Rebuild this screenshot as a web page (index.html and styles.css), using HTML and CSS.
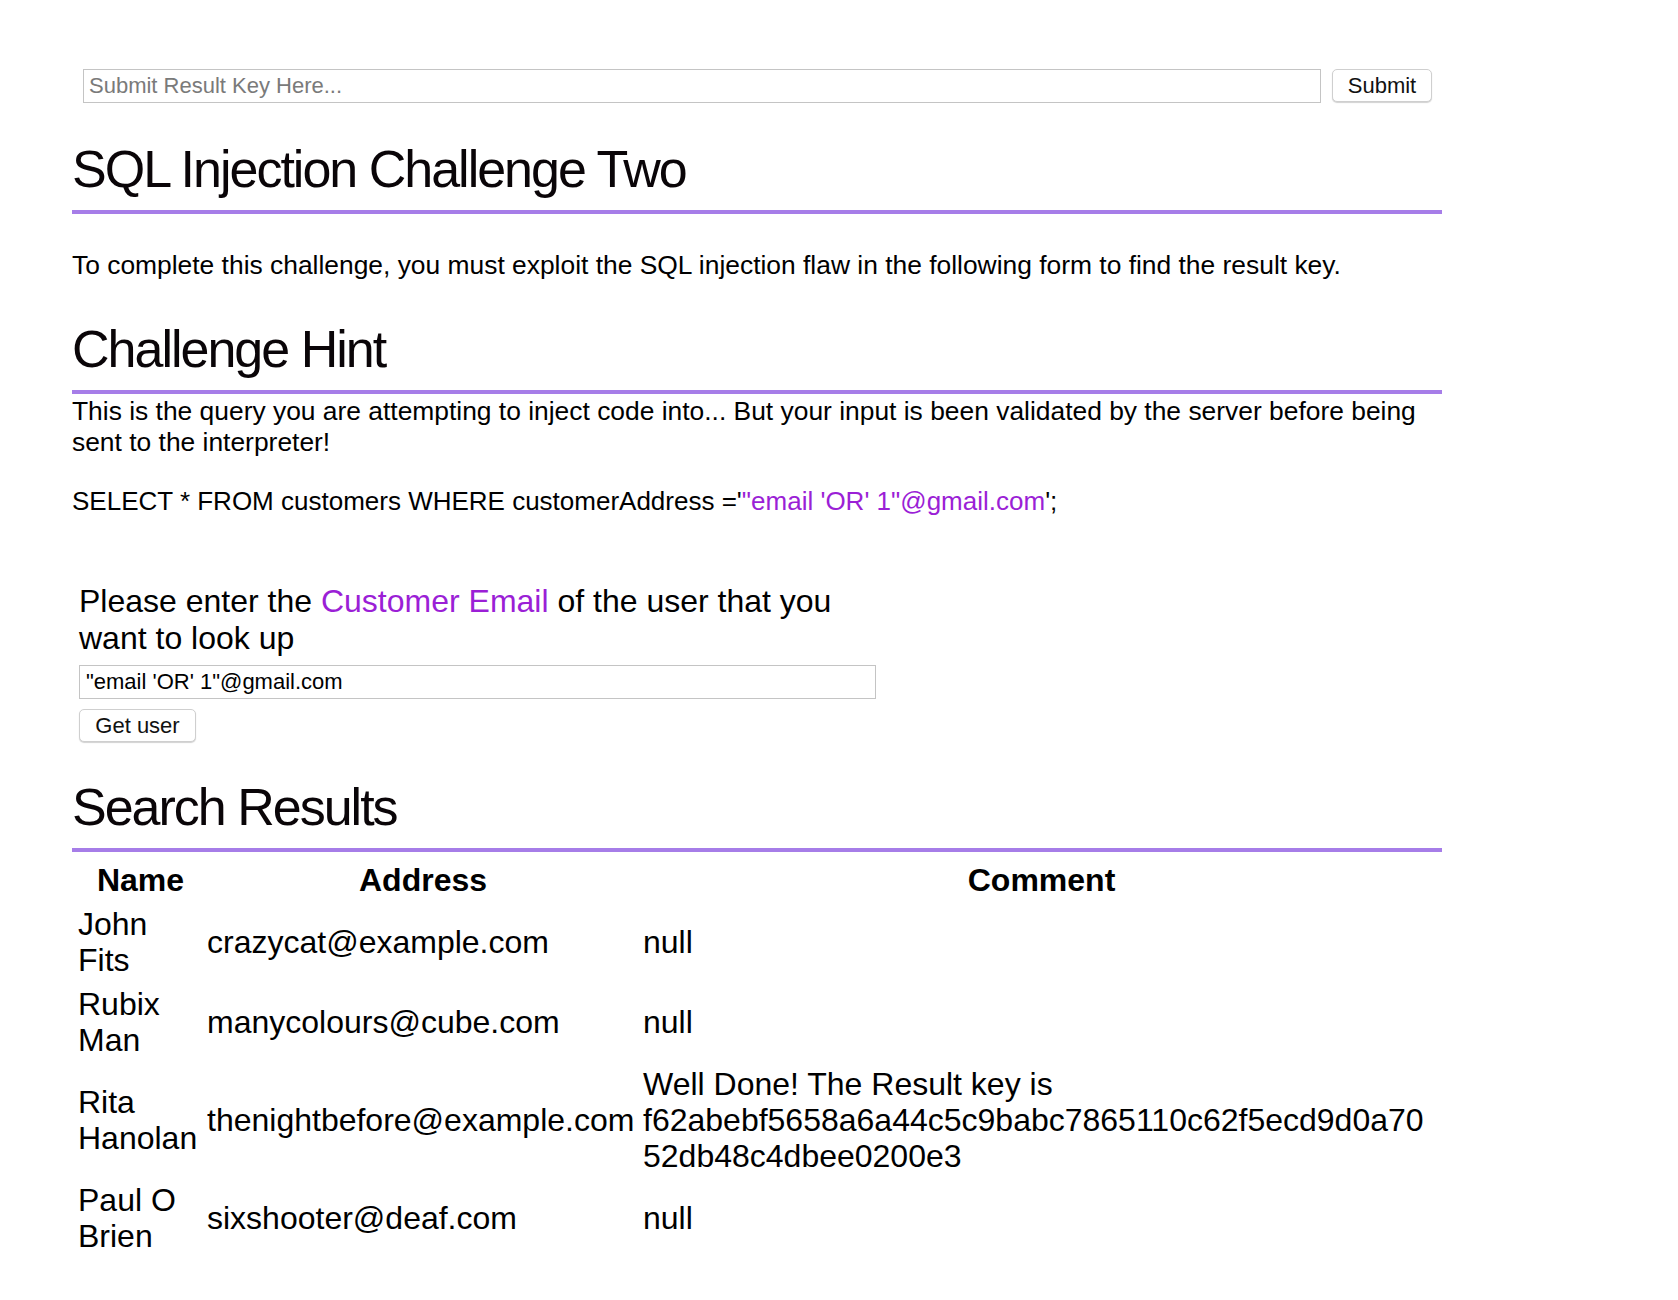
FILE: index.html
```html
<!DOCTYPE html>
<html lang="en">
<head>
<meta charset="utf-8">
<title>SQL Injection Challenge Two</title>
<link rel="stylesheet" href="styles.css">
</head>
<body>
<div class="page">
  <form class="keybar">
    <input class="key-input" type="text" placeholder="Submit Result Key Here...">
    <button class="btn btn-submit" type="button">Submit</button>
  </form>

  <h1 class="title">SQL Injection Challenge Two</h1>
  <p class="intro">To complete this challenge, you must exploit the SQL injection flaw in the following form to find the result key.</p>

  <h2 class="title section">Challenge Hint</h2>
  <p class="hint">This is the query you are attempting to inject code into... But your input is been validated by the server before being sent to the interpreter!</p>
  <p class="query">SELECT * FROM customers WHERE customerAddress ='<span class="accent">"email 'OR' 1"@gmail.com</span>';</p>

  <form class="lookup">
    <p class="lookup-label">Please enter the <span class="accent">Customer Email</span> of the user that you want to look up</p>
    <input class="lookup-input" type="text" value="&quot;email 'OR' 1&quot;@gmail.com">
    <button class="btn btn-get" type="button">Get user</button>
  </form>

  <h2 class="title section results-title">Search Results</h2>
  <table class="results">
    <colgroup>
      <col class="col-name">
      <col class="col-address">
      <col class="col-comment">
    </colgroup>
    <thead>
      <tr><th>Name</th><th>Address</th><th>Comment</th></tr>
    </thead>
    <tbody>
      <tr><td>John Fits</td><td>crazycat@example.com</td><td>null</td></tr>
      <tr><td>Rubix Man</td><td>manycolours@cube.com</td><td>null</td></tr>
      <tr><td>Rita Hanolan</td><td>thenightbefore@example.com</td><td class="comment">Well Done! The Result key is f62abebf5658a6a44c5c9babc7865110c62f5ecd9d0a7052db48c4dbee0200e3</td></tr>
      <tr><td>Paul O Brien</td><td>sixshooter@deaf.com</td><td>null</td></tr>
    </tbody>
  </table>
</div>
</body>
</html>
```

FILE: styles.css
```css
html, body {
  margin: 0;
  padding: 0;
  background: #ffffff;
}

body {
  font-family: "Liberation Sans", Arial, Helvetica, sans-serif;
  color: #000000;
}

.page {
  width: 1370px;
  margin-left: 72px;
  padding-top: 69px;
  padding-bottom: 40px;
}

/* top key bar */
.keybar {
  display: flex;
  align-items: flex-start;
  gap: 11px;
  padding-left: 11px;
  margin: 0;
}

.key-input {
  box-sizing: border-box;
  width: 1238px;
  height: 34px;
  margin: 0;
  padding: 0 5px;
  border: 1px solid #c4c4c4;
  border-radius: 0;
  font-family: "Liberation Sans", Arial, sans-serif;
  font-size: 22px;
  color: #000;
  outline: none;
}

.key-input::placeholder {
  color: #7a7a7a;
}

.btn {
  box-sizing: border-box;
  margin: 0;
  padding: 0;
  background: #ffffff;
  border: 1px solid #cfcfcf;
  border-radius: 5px;
  box-shadow: 0 1px 1px rgba(0, 0, 0, 0.18);
  font-family: "Liberation Sans", Arial, sans-serif;
  font-size: 22px;
  color: #111;
  cursor: pointer;
}

.btn-submit {
  width: 100px;
  height: 33px;
}

/* headings */
.title {
  margin: 36px 0 0 0;
  padding: 0 0 11px 0;
  border-bottom: 4px solid #a67de8;
  font-size: 52px;
  line-height: 60px;
  font-weight: 400;
  letter-spacing: -2px;
  color: #0a0508;
}

.section {
  margin-top: 39px;
}

.results-title {
  margin-top: 35px;
}

/* text */
.intro {
  margin: 36px 0 0 0;
  font-size: 26.4px;
  line-height: 30px;
}

.hint {
  margin: 0;
  padding-top: 2px;
  font-size: 26.4px;
  line-height: 30.5px;
}

.query {
  margin: 29px 0 0 0;
  font-size: 26px;
  line-height: 30px;
}

.accent {
  color: #9b1fd6;
}

/* lookup form */
.lookup {
  width: 797px;
  margin: 67px 0 0 7px;
  display: flex;
  flex-direction: column;
  align-items: flex-start;
}

.lookup-label {
  margin: 0;
  font-size: 32px;
  line-height: 36.5px;
}

.lookup-input {
  box-sizing: border-box;
  width: 797px;
  height: 34px;
  margin: 9px 0 0 0;
  padding: 0 6px;
  border: 1px solid #c4c4c4;
  border-radius: 0;
  font-family: "Liberation Sans", Arial, sans-serif;
  font-size: 22px;
  color: #000;
  outline: none;
}

.btn-get {
  width: 117px;
  height: 33px;
  margin-top: 10px;
}

/* results table */
.results {
  width: 1366px;
  margin: 6px 0 0 4px;
  table-layout: fixed;
  border-collapse: separate;
  border-spacing: 0;
  font-size: 32px;
  line-height: 36px;
}

.col-name { width: 129px; }
.col-address { width: 436px; }
.col-comment { width: 801px; }

.results th,
.results td {
  padding: 4px 2px;
  vertical-align: middle;
}

.results th {
  font-weight: 700;
  text-align: center;
}

.results td {
  text-align: left;
}

.results .comment {
  overflow-wrap: anywhere;
}
```
